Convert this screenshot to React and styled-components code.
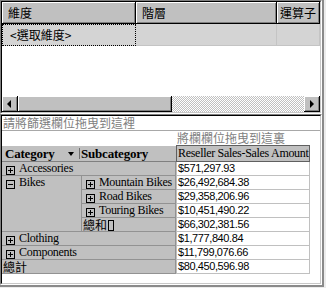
import React from 'react'
import styled, { createGlobalStyle } from 'styled-components'

const GlobalStyle = createGlobalStyle`
  html, body {
    margin: 0;
    padding: 0;
    background: #ececec;
  }
  body {
    width: 326px;
    height: 288px;
    overflow: hidden;
    font-family: "Noto Sans CJK TC", "Liberation Sans", sans-serif;
  }
`

const Screen = styled.div`
  width: 326px;
  height: 288px;
  background: #ececec;
`

const Frame = styled.div`
  width: 322px;
  height: 285px;
  border-right: 2px solid #8a8a8a;
  border-bottom: 2px solid #8a8a8a;
  display: flex;
  flex-direction: column;
`

// two-tone sunken edge: outer and inner bevel
const Sunken = styled.div`
  height: ${p => p.$h}px;
  box-sizing: border-box;
  border: 1px solid;
  border-color: #808080 #fff #fff #808080;
  display: flex;
`

const Well = styled.div`
  flex: 1;
  box-sizing: border-box;
  border: 1px solid;
  border-color: #000 #c8c8c8 #c8c8c8 #000;
  background: #fff;
  display: flex;
  flex-direction: column;
  overflow: hidden;
`

const HeaderRow = styled.div`
  display: flex;
  height: 22px;
  flex: none;
`

const HeadCell = styled.div`
  width: ${p => p.$w}px;
  box-sizing: border-box;
  height: 22px;
  background: #c0c0c0;
  border-right: 1px solid #000;
  border-bottom: 1px solid #000;
  box-shadow: inset 1px 1px #fff, inset -1px -1px #808080;
  padding-left: ${p => p.$pad ?? 6}px;
  font-size: 12px;
  line-height: 21px;
  color: #000;
  white-space: nowrap;
  overflow: hidden;
`

const SelectRow = styled.div`
  display: flex;
  height: 22px;
  flex: none;
  background: #d4d4d4;
`

const SelectCell = styled.div`
  width: ${p => p.$w}px;
  box-sizing: border-box;
  height: 22px;
  border-right: 1px solid #c4c4c4;
  border-bottom: 1px solid #c4c4c4;
  font-size: 12px;
  line-height: 20px;
  padding-left: 7px;
  white-space: nowrap;
  ${p => p.$focus && `
    border: 1px dotted #000;
  `}
`

const Blank = styled.div`
  flex: 1;
  background: #fff;
`

const ScrollBar = styled.div`
  display: flex;
  height: 16px;
  flex: none;
`

const ScrollButton = styled.div`
  width: ${p => p.$w || 16}px;
  height: 16px;
  flex: none;
  box-sizing: border-box;
  background: #c0c0c0;
  border-right: 1px solid #000;
  border-bottom: 1px solid #000;
  box-shadow: inset 1px 1px #fff, inset -1px -1px #808080;
  display: flex;
  align-items: center;
  justify-content: center;
`

const Arrow = styled.span`
  width: 0;
  height: 0;
  border-top: 4px solid transparent;
  border-bottom: 4px solid transparent;
  ${p => p.$dir === 'left'
    ? 'border-right: 4px solid #000; margin-right: 1px;'
    : 'border-left: 4px solid #000; margin-left: 1px;'}
`

const Track = styled.div`
  flex: 1;
  background: repeating-conic-gradient(#c0c0c0 0 25%, #fff 0 50%) 0 0 / 2px 2px;
`

const DropZone = styled.div`
  height: ${p => p.$h}px;
  flex: none;
  box-sizing: border-box;
  padding-left: ${p => p.$indent}px;
  font-size: 12px;
  line-height: 14px;
  color: #808080;
  white-space: nowrap;
  ${p => p.$line && 'border-bottom: 1px solid #a8a8a8;'}
`

const Pivot = styled.div`
  display: grid;
  grid-template-columns: 80px 94px 134px;
  grid-template-rows: 17px repeat(8, 14px);
  flex: none;
`

const FieldBar = styled.div`
  grid-column: 1 / 3;
  grid-row: 1;
  margin-top: 1px;
  background: #c0c0c0;
  border-bottom: 1px solid #808080;
  display: flex;
  align-items: center;
  font: bold 13px/15px "Liberation Serif", serif;
  letter-spacing: -0.2px;
`

const Field = styled.div`
  width: ${p => p.$w ? `${p.$w}px` : 'auto'};
  flex: ${p => p.$w ? 'none' : 1};
  box-sizing: border-box;
  display: flex;
  align-items: center;
  padding-left: ${p => p.$pad}px;
  ${p => p.$grip && 'border-left: 1px solid #707070; height: 11px;'}
`

const DropArrow = styled.span`
  margin-left: auto;
  margin-right: 5px;
  width: 0;
  height: 0;
  border-left: 3px solid transparent;
  border-right: 3px solid transparent;
  border-top: 4px solid #000;
`

const LabelCell = styled.div`
  grid-column: ${p => p.$cols};
  grid-row: ${p => p.$row} / span ${p => p.$span || 1};
  box-sizing: border-box;
  background: #c0c0c0;
  border-right: 1px solid #929292;
  border-bottom: 1px solid #929292;
  display: flex;
  align-items: flex-start;
  gap: 4px;
  padding-left: ${p => p.$pad ?? 4}px;
  font: 12px/13px "Liberation Serif", serif;
  letter-spacing: -0.3px;
  white-space: nowrap;
  color: #000;
`

const Cjk = styled.span`
  font-family: "Noto Sans CJK TC", sans-serif;
  font-size: 12px;
  letter-spacing: 0;
  line-height: 13px;
`

const Tofu = styled.span`
  display: inline-block;
  width: 4px;
  height: 9px;
  margin-top: 2px;
  margin-left: -3px;
  border: 1px solid #000;
`

const ValueHead = styled.div`
  grid-column: 3;
  grid-row: 1;
  box-sizing: border-box;
  background: #c0c0c0;
  border: 1px solid #606060;
  font: 12px/15px "Liberation Serif", serif;
  letter-spacing: -0.3px;
  padding-left: 1px;
  white-space: nowrap;
  overflow: hidden;
`

const ValueCell = styled.div`
  grid-column: 3;
  grid-row: ${p => p.$row};
  box-sizing: border-box;
  background: #fff;
  border-left: 1px solid #c0c0c0;
  border-right: 1px solid #c0c0c0;
  border-bottom: 1px solid #c0c0c0;
  font: 11px/13px "Liberation Sans", sans-serif;
  letter-spacing: -0.4px;
  padding-left: 1px;
  white-space: nowrap;
`

const Toggle = ({ open }) => (
  <svg width="9" height="9" style={{ flex: 'none', marginTop: 4 }} shapeRendering="crispEdges">
    <rect x="0.5" y="0.5" width="8" height="8" fill="none" stroke="#000" />
    <path d="M2 4.5h5" stroke="#000" />
    {!open && <path d="M4.5 2v5" stroke="#000" />}
  </svg>
)

const rows = [
  { label: 'Accessories', cols: '1 / 3', value: '$571,297.93' },
  { label: 'Mountain Bikes', cols: '2', value: '$26,492,684.38' },
  { label: 'Road Bikes', cols: '2', value: '$29,358,206.96' },
  { label: 'Touring Bikes', cols: '2', value: '$10,451,490.22' },
  { label: '總和', cols: '2', value: '$66,302,381.56', total: true },
  { label: 'Clothing', cols: '1 / 3', value: '$1,777,840.84' },
  { label: 'Components', cols: '1 / 3', value: '$11,799,076.66' },
  { label: '總計', cols: '1 / 3', value: '$80,450,596.98', total: true },
]

export default function App() {
  return (
    <Screen>
      <GlobalStyle />
      <Frame>
        <Sunken $h={114}>
          <Well>
            <HeaderRow>
              <HeadCell $w={134}>維度</HeadCell>
              <HeadCell $w={141}>階層</HeadCell>
              <HeadCell $w={43} $pad={3}>運算子</HeadCell>
            </HeaderRow>
            <SelectRow>
              <SelectCell $w={134} $focus>&lt;選取維度&gt;</SelectCell>
              <SelectCell $w={141} />
              <SelectCell $w={43} />
            </SelectRow>
            <Blank />
            <ScrollBar>
              <ScrollButton><Arrow $dir="left" /></ScrollButton>
              <ScrollButton $w={154} />
              <Track />
              <ScrollButton><Arrow $dir="right" /></ScrollButton>
            </ScrollBar>
          </Well>
        </Sunken>
        <Sunken $h={171}>
          <Well>
            <DropZone $h={15} $indent={1} $line>請將篩選欄位拖曳到這裡</DropZone>
            <DropZone $h={14} $indent={175}>將欄欄位拖曳到這裏</DropZone>
            <Pivot>
              <FieldBar>
                <Field $w={77} $pad={3}>
                  Category
                  <DropArrow />
                </Field>
                <Field $grip $pad={1}>Subcategory</Field>
              </FieldBar>
              <ValueHead>Reseller Sales-Sales Amount</ValueHead>
              <LabelCell $cols="1" $row={3} $span={4}>
                <Toggle open />
                Bikes
              </LabelCell>
              {rows.map((r, i) => (
                <React.Fragment key={r.label}>
                  <LabelCell $cols={r.cols} $row={i + 2} $pad={r.total ? 1 : 4}>
                    {r.total ? (
                      <>
                        <Cjk>{r.label}</Cjk>
                        {r.label === '總和' && <Tofu />}
                      </>
                    ) : (
                      <>
                        <Toggle />
                        {r.label}
                      </>
                    )}
                  </LabelCell>
                  <ValueCell $row={i + 2}>{r.value}</ValueCell>
                </React.Fragment>
              ))}
            </Pivot>
          </Well>
        </Sunken>
      </Frame>
    </Screen>
  )
}
